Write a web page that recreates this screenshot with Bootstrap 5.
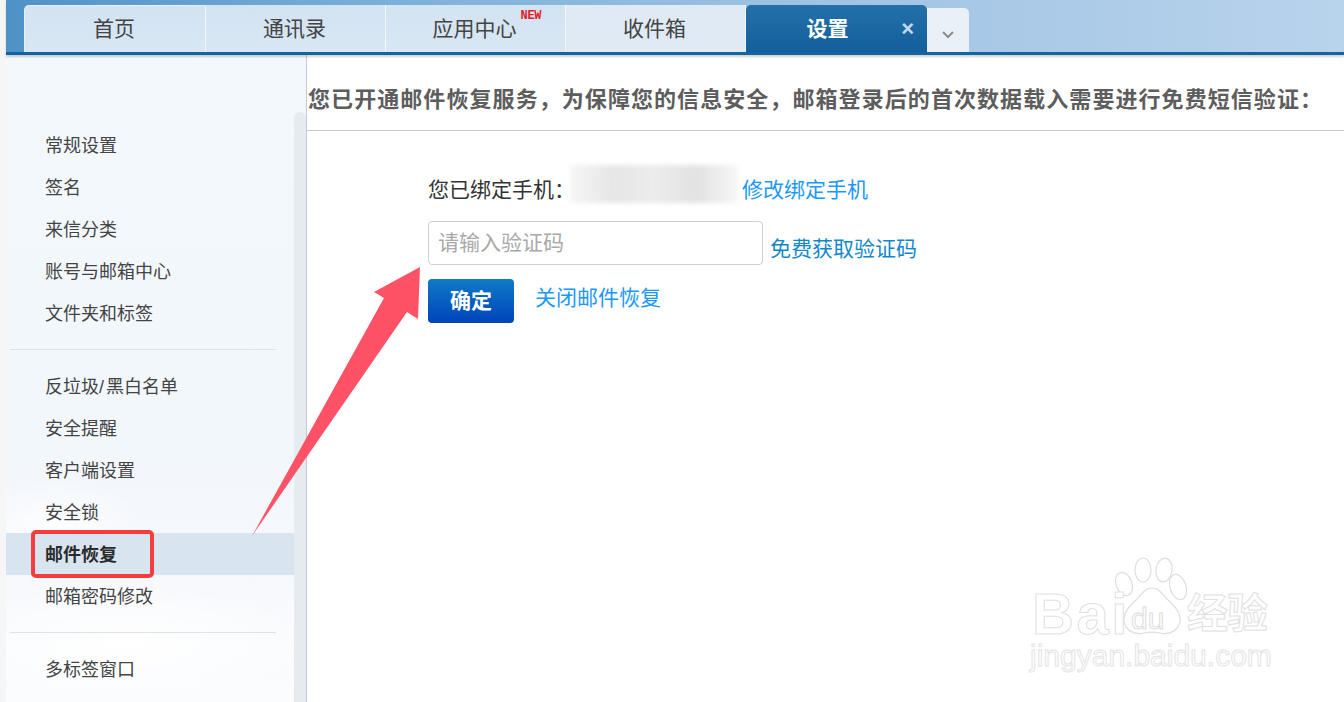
<!DOCTYPE html>
<html lang="zh"><head><meta charset="utf-8"><title>设置</title>
<link rel="stylesheet" href="https://cdn.jsdelivr.net/npm/bootstrap@5.3.0/dist/css/bootstrap.min.css">
<style>
html,body{height:702px;overflow:hidden}
body{font-family:"Liberation Sans","Noto Sans CJK SC",sans-serif;background:#fff;color:#333;position:relative}
.pagewrap{background:linear-gradient(90deg,#f6f6f6 0,#f6f6f6 6px,#fff 6px)}
.topbar{height:55px;margin-left:6px;padding:5px 0 0 18px;background:linear-gradient(90deg,#4f92c6 0%,#7fb0da 30%,#9fc3e4 60%,#b9d3ec 100%);border-bottom:3px solid #13659f;box-shadow:0 2px 2px rgba(0,0,0,.18);position:relative;z-index:1}
.tabitem{width:180px;height:47px;font-size:21px;line-height:48px;text-align:center;color:#444;background:linear-gradient(180deg,#d2e3f1,#d9e7f4);border-right:1px solid #f2f7fb;position:relative;padding-right:2px}
.tabitem.tab-first{width:182px;border-top-left-radius:5px;border-left:1px solid #e6f0f8;border-top:1px solid #eaf2f9;line-height:46px}
.tabitem.tab-c{background:#dfeaf5}
.tabitem.tab-active{width:181px;background:linear-gradient(180deg,#2570a9,#125f9b);color:#fff;font-weight:700;border:0;border-radius:5px 5px 0 0;padding-right:18px}
.tabitem.tab-more{width:42px;height:44px;margin-top:3px;background:#e9f0f8;border:0;border-radius:0 5px 0 0;color:#888;padding:8px 0 0}
.tabnew{position:absolute;top:6px;right:24px;font-family:"Liberation Mono",monospace;font-size:12px;line-height:10px;font-weight:700;color:#e11d2a;letter-spacing:-.4px}
.tabclose{position:absolute;top:0;right:13px;font-size:22px;color:#c5d8e8;font-weight:700}
.pagebody{height:647px}
.sidepane{width:288px;margin-left:6px;flex:none;background:radial-gradient(ellipse 90px 45px at 50px 470px,rgba(255,255,255,.8),transparent),radial-gradient(ellipse 200px 60px at 120px 590px,#fff,transparent),linear-gradient(180deg,#f3f8fc 0%,#f2f7fc 60%,#f5f8fc 75%,#fbfcfe 100%);padding-top:70px}
.sideitem{height:42px;line-height:42px;padding-left:39px;font-size:18px;color:#444}
.sidegroup-b .sideitem{line-height:44px}
.sideitem.side-on{background:#d8e5f0;font-weight:700;color:#2b2b2b}
.sideslash{letter-spacing:2px}
.siderule{height:1px;background:#dfe3e7;margin-left:4px;margin-right:18px}
.rule-a{margin-top:14px;margin-bottom:15px}
.rule-b{margin-top:15px;margin-bottom:16px}
.scrolltrack{width:13px;flex:none;background:#f3f8fc;border-right:1px solid #bfccd7;position:relative}
.scrollthumb{position:absolute;top:57px;left:0;right:0;bottom:0;background:#e6ebef;border-radius:6px 6px 0 0}
.mainpane{min-width:0}
.infohead{height:76px;border-bottom:1px solid #c9c9c9;padding:28px 0 0 1px;font-size:22px;line-height:33px;letter-spacing:1.07px;font-weight:700;color:#5d5d5d;white-space:nowrap}
.formzone{padding:34px 0 0 121px}
.bindrow{height:38px;font-size:21px;line-height:50px;color:#333}
.bindlabel{width:142px;white-space:nowrap;flex:none}
.maskblur{width:168px;height:38px;margin:0 4px 0 0;background:linear-gradient(90deg,#f7f7f7,#e6e6e6 25%,#ececec 50%,#e2e2e2 75%,#f7f7f7);filter:blur(2px)}
.linkblue{color:#1a98ff;text-decoration:none;font-size:21px}
.linkteal{color:#1287cc;text-decoration:none;font-size:21px;line-height:28px}
.codeinput{width:335px;height:44px;border:1px solid #cfcfcf;border-radius:4px;font-size:21px;padding:0 9px;background:#fff;color:#333;box-shadow:none;flex:none}
.codeinput::placeholder{color:#a9a9a9;opacity:1}
.coderow{margin-top:18px}
.coderow .linkteal{margin-left:7px;margin-bottom:2px}
.okbtn{width:86px;height:44px;padding:0;font-size:21px;font-weight:700;color:#fff;border:0;border-radius:4px;background:linear-gradient(180deg,#0f7bc6,#0043bb)}
.okrow{margin-top:14px}
.okrow .linkblue{margin-left:21px;line-height:38px}
.pinred{position:absolute;left:31px;top:530px;width:123px;height:48px;border:4px solid #f53d3d;border-radius:5px;z-index:3;pointer-events:none}
.arrowlay{position:absolute;left:240px;top:250px;z-index:3;pointer-events:none}
.wmark{position:absolute;left:1030px;top:557px;width:250px;height:125px;z-index:2;color:#fff;pointer-events:none}
.wm-big{position:absolute;left:2px;top:35px;font-family:"Liberation Sans",sans-serif;font-size:58px;line-height:43px;font-weight:700;-webkit-text-stroke:1px #e0e0e0;letter-spacing:2.5px}
.wm-du{position:absolute;left:101px;top:47px;font-size:30px;line-height:30px;-webkit-text-stroke:1px #dcdcdc}
.wm-cn{position:absolute;left:157px;top:36px;font-size:41px;line-height:42px;font-weight:700;letter-spacing:-1px;-webkit-text-stroke:1px #e0e0e0}
.wm-url{position:absolute;left:0;top:87px;font-size:30px;line-height:24px;-webkit-text-stroke:1px #e4e4e4;white-space:nowrap}
.wm-paw{position:absolute;left:83px;top:0}
</style></head>
<body>
<div class="pagewrap">
<div class="topbar d-flex align-items-start">
  <div class="tabitem tab-first">首页</div>
  <div class="tabitem">通讯录</div>
  <div class="tabitem">应用中心<span class="tabnew">NEW</span></div>
  <div class="tabitem tab-c">收件箱</div>
  <div class="tabitem tab-active">设置<span class="tabclose">×</span></div>
  <div class="tabitem tab-more d-flex align-items-center justify-content-center">
    <svg width="14" height="9" viewBox="0 0 14 9"><path d="M2 2l5 5 5-5" fill="none" stroke="#8c8c8c" stroke-width="2"/></svg>
  </div>
</div>
<div class="pagebody d-flex">
  <div class="sidepane">
    <div class="sideitem">常规设置</div>
    <div class="sideitem">签名</div>
    <div class="sideitem">来信分类</div>
    <div class="sideitem">账号与邮箱中心</div>
    <div class="sideitem">文件夹和标签</div>
    <div class="siderule rule-a"></div>
    <div class="sidegroup-b">
      <div class="sideitem">反垃圾<span class="sideslash">/</span>黑白名单</div>
      <div class="sideitem">安全提醒</div>
      <div class="sideitem">客户端设置</div>
      <div class="sideitem">安全锁</div>
      <div class="sideitem side-on">邮件恢复</div>
      <div class="sideitem">邮箱密码修改</div>
    </div>
    <div class="siderule rule-b"></div>
    <div class="sideitem">多标签窗口</div>
  </div>
  <div class="scrolltrack"><div class="scrollthumb"></div></div>
  <div class="mainpane flex-grow-1">
    <div class="infohead">您已开通邮件恢复服务，为保障您的信息安全，邮箱登录后的首次数据载入需要进行免费短信验证：</div>
    <div class="formzone">
      <div class="bindrow d-flex">
        <span class="bindlabel">您已绑定手机：</span>
        <div class="maskblur"></div>
        <a class="linkblue" href="#">修改绑定手机</a>
      </div>
      <div class="coderow d-flex align-items-end">
        <input class="codeinput form-control" placeholder="请输入验证码">
        <a class="linkteal" href="#">免费获取验证码</a>
      </div>
      <div class="okrow d-flex align-items-start">
        <button class="btn okbtn" type="button">确定</button>
        <a class="linkblue" href="#">关闭邮件恢复</a>
      </div>
    </div>
  </div>
</div>
</div>
<div class="pinred"></div>
<svg class="arrowlay" width="190" height="290" viewBox="240 250 190 290"><path d="M252 536 L384 298 L374 292 L420 267 L418 319 L407 312 Z" fill="#ff5266"/></svg>
<div class="wmark">
  <svg class="wm-paw" width="76" height="82" viewBox="0 0 76 82" fill="#fff" stroke="#dedede" stroke-width="1.2">
    <ellipse cx="11" cy="27" rx="8" ry="12" transform="rotate(-20 11 27)"/>
    <ellipse cx="30" cy="13" rx="8" ry="12"/>
    <ellipse cx="51" cy="13" rx="8" ry="12" transform="rotate(8 51 13)"/>
    <ellipse cx="65" cy="30" rx="8" ry="13" transform="rotate(-18 65 30)"/>
    <path d="M39 31c-8 0-11 8-18 14-6 6-11 11-10 20 2 9 11 13 20 11 5-1 11-1 16 0 9 2 18-2 20-11 1-9-4-14-10-20-7-6-10-14-18-14z"/>
  </svg>
  <div class="wm-big">Bai</div>
  <div class="wm-du">du</div>
  <div class="wm-cn">经验</div>
  <div class="wm-url">jingyan.baidu.com</div>
</div>
<script src="https://cdn.jsdelivr.net/npm/bootstrap@5.3.0/dist/js/bootstrap.bundle.min.js"></script>
</body></html>
